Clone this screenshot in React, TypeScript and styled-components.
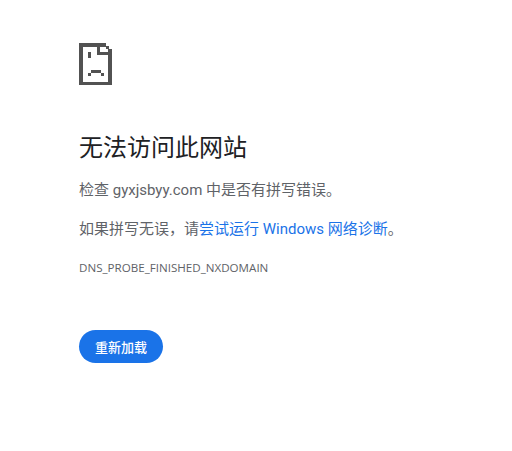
import * as React from 'react';
import styled, {createGlobalStyle} from 'styled-components';

const GlobalStyle = createGlobalStyle`
    html, body {
        margin: 0;
        background: #fff;
    }
`;

const Page = styled.div`
    box-sizing: border-box;
    width: 512px;
    height: 451px;
    padding: 43px 0 0 79px;
    font-family: Roboto, 'Noto Sans CJK SC', sans-serif;
    color: #5f6368;
    font-size: 15px;
    line-height: 25px;
`;

const Icon = styled.svg`
    display: block;
    width: 33px;
    height: 42px;
    shape-rendering: crispEdges;
`;

const Heading = styled.h1`
    margin: 47px 0 0;
    font-size: 24px;
    line-height: 32px;
    font-weight: 400;
    color: #202124;
`;

const Paragraph = styled.p`
    margin: 14px 0 0;
    white-space: nowrap;
`;

const Link = styled.span`
    color: #1a73e8;
`;

const ErrorCode = styled.div`
    margin-top: 18px;
    font-family: 'Open Sans', sans-serif;
    font-size: 11.6px;
    line-height: 16px;
`;

const ReloadButton = styled.button`
    display: block;
    margin-top: 54px;
    width: 84px;
    height: 33px;
    padding: 0;
    border: 0;
    border-radius: 17px;
    background: #1a73e8;
    color: #fff;
    font-family: inherit;
    font-size: 13px;
    font-weight: 500;
`;

const SadFile = () => (
    <Icon viewBox="0 0 33 42" fill="#525252">
        <path d="M0 0h27v3.5H4v35h25V6h4v36H0z" />
        <path d="M18 3h3v6h12v3H18z" />
        <path d="M27 3h3v3h-3z" />
        <path d="M9 9h3v6H9z" />
        <path d="M12 27h10v3H12zM9 30h3v3H9zM22 30h3v3h-3z" />
    </Icon>
);

export default function App() {
    return (
        <Page>
            <GlobalStyle />
            <SadFile />
            <Heading>无法访问此网站</Heading>
            <Paragraph>检查 gyxjsbyy.com 中是否有拼写错误。</Paragraph>
            <Paragraph>
                如果拼写无误，请<Link>尝试运行 Windows 网络诊断</Link>。
            </Paragraph>
            <ErrorCode>DNS_PROBE_FINISHED_NXDOMAIN</ErrorCode>
            <ReloadButton>重新加载</ReloadButton>
        </Page>
    );
}
